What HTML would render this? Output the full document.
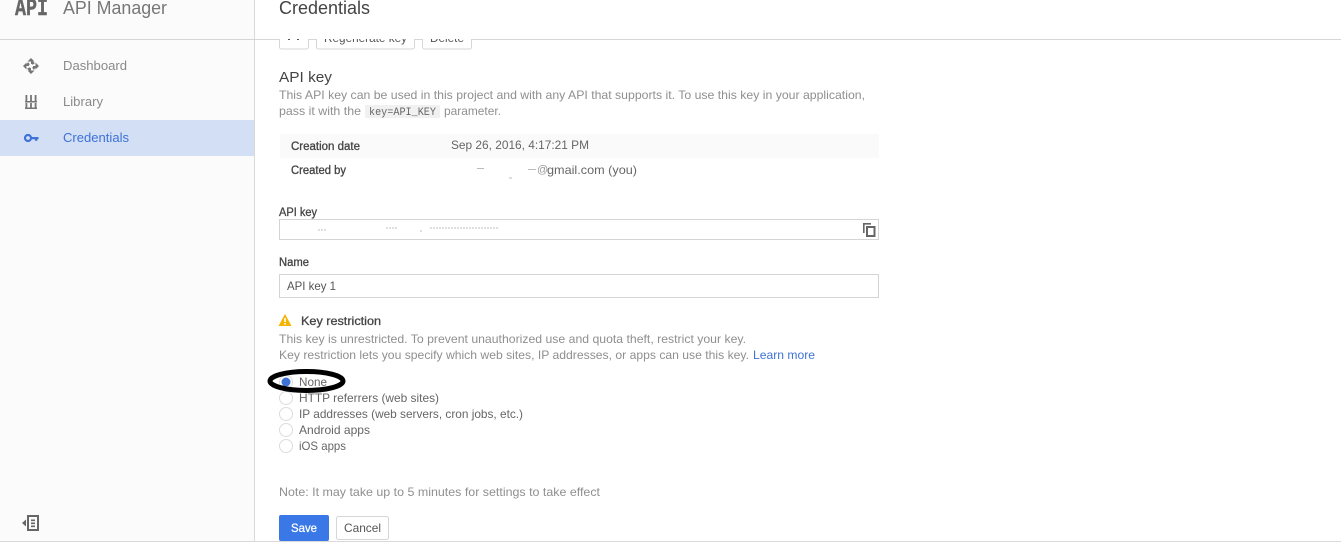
<!DOCTYPE html>
<html><head><meta charset="utf-8"><style>
html,body{margin:0;padding:0;background:#fff}
body{width:1341px;height:542px;position:relative;overflow:hidden;font-family:"Liberation Sans",sans-serif}
svg{position:absolute;left:0;top:0}
text{font-family:"Liberation Sans",sans-serif}
.m{stroke:#444;stroke-width:.3;fill:#444}
</style></head><body>
<svg width="1341" height="542" viewBox="0 0 1341 542">
<rect x="0" y="0" width="254" height="542" fill="#fbfbfb"/>
<rect x="0" y="120" width="254" height="36" fill="#d2dff5"/>
<rect x="254" y="0" width="1" height="542" fill="#d9d9d9"/>
<rect x="0" y="39" width="1341" height="1" fill="#d6d6d6"/>
<rect x="0" y="541" width="1341" height="1" fill="#d9d9d9"/>

<!-- API logo -->
<text x="15" y="15" font-size="24" font-weight="bold" fill="#666" stroke="#666" stroke-width=".4" style="font-family:'Liberation Mono',monospace" textLength="33" lengthAdjust="spacingAndGlyphs">API</text>
<text x="63" y="14" font-size="18" fill="#777" textLength="104" lengthAdjust="spacingAndGlyphs">API Manager</text>

<!-- nav icons -->
<g fill="#757575">
<path d="M31 58l3.5 3.5h-7zM31 74l3.5-3.5h-7zM23 66l3.5-3.5v7zM39 66l-3.5-3.5v7z"/>
<circle cx="31" cy="66" r="3.4" fill="none" stroke="#757575" stroke-width="2.6" stroke-dasharray="3.2 2.1"/>
<path d="M25.5 95h1.8v6h-1.8zM30.1 95h1.8v6h-1.8zM34.7 95h1.8v6h-1.8zM25 101h12v1.5H25zM25.5 103h1.8v4.5h-1.8zM30.1 103h1.8v4.5h-1.8zM34.7 103h1.8v4.5h-1.8zM25 107.5h12v1.5H25z"/>
</g>
<g fill="#3f72d6">
<circle cx="28" cy="138" r="3" fill="none" stroke="#3f72d6" stroke-width="2.2"/>
<path d="M31 137h7.5v2.2h-1.2v1.6h-2.4v-1.6H31z"/>
</g>
<text x="63" y="70" font-size="12.5" fill="#8a8a8a" textLength="64" lengthAdjust="spacingAndGlyphs">Dashboard</text>
<text x="63" y="106" font-size="12.5" fill="#8a8a8a" textLength="40" lengthAdjust="spacingAndGlyphs">Library</text>
<text x="63" y="142" font-size="12.5" fill="#3f72d6" textLength="66" lengthAdjust="spacingAndGlyphs">Credentials</text>

<!-- collapse icon -->
<path d="M22 523l4-3.5v7z" fill="#666"/>
<rect x="28" y="516" width="10" height="14" fill="none" stroke="#666" stroke-width="2"/>
<path d="M31 519.5h4v1.6h-4zM31 522.5h4v1.6h-4zM31 525.5h4v1.6h-4z" fill="#666"/>

<!-- clipped top buttons -->
<g fill="#fff" stroke="#d6d6d6">
<rect x="279.5" y="28" width="29" height="21" rx="2"/>
<rect x="316.5" y="28" width="98" height="21" rx="2"/>
<rect x="422.5" y="28" width="49" height="21" rx="2"/>
</g>
<text x="324" y="42" font-size="11.5" fill="#555" textLength="83" lengthAdjust="spacingAndGlyphs">Regenerate key</text>
<text x="430" y="42" font-size="11.5" fill="#555" textLength="34" lengthAdjust="spacingAndGlyphs">Delete</text>
<path d="M288 37h2v3h-2zM297 37h2v3h-2z" fill="#555"/>
<rect x="255" y="0" width="1086" height="39" fill="#fff"/>
<text x="279" y="14" font-size="18" fill="#444" textLength="91" lengthAdjust="spacingAndGlyphs">Credentials</text>

<!-- API key -->
<text x="279" y="82" font-size="15" fill="#444" textLength="53" lengthAdjust="spacingAndGlyphs">API key</text>
<text x="279" y="99" font-size="12" fill="#8f8f8f" textLength="586" lengthAdjust="spacingAndGlyphs">This API key can be used in this project and with any API that supports it. To use this key in your application,</text>
<text x="279" y="115" font-size="12" fill="#8f8f8f" textLength="82" lengthAdjust="spacingAndGlyphs">pass it with the</text>
<rect x="365" y="105" width="75" height="13" fill="#f1f1f1"/>
<text x="369" y="115" font-size="11" fill="#666" style="font-family:'Liberation Mono',monospace" textLength="67" lengthAdjust="spacingAndGlyphs">key=API_KEY</text>
<text x="444" y="115" font-size="12" fill="#8f8f8f" textLength="57" lengthAdjust="spacingAndGlyphs">parameter.</text>

<rect x="280" y="134" width="599" height="24" fill="#fafafa"/>
<text x="291" y="150" font-size="11.5" class="m" textLength="69" lengthAdjust="spacingAndGlyphs">Creation date</text>
<text x="451" y="149" font-size="12" fill="#666" textLength="138" lengthAdjust="spacingAndGlyphs">Sep 26, 2016, 4:17:21 PM</text>
<text x="291" y="174" font-size="11.5" class="m" textLength="55" lengthAdjust="spacingAndGlyphs">Created by</text>
<text x="547" y="174" font-size="12" fill="#666" textLength="90" lengthAdjust="spacingAndGlyphs">gmail.com (you)</text>
<text x="537" y="173" font-size="11" fill="#999">@</text>
<path d="M477 168.5h7M509 178h3M528 169.5h8" stroke="#bbb" stroke-width="1"/>

<text x="279" y="216" font-size="11.5" class="m" textLength="38" lengthAdjust="spacingAndGlyphs">API key</text>
<rect x="279.5" y="219.5" width="599" height="20" fill="#fff" stroke="#d4d4d4"/>
<path d="M318 230h9M386 228h12M420 231h2M430 228h68" stroke="#ccc" stroke-width="1.2" stroke-dasharray="2 1"/>
<g fill="#666">
<path d="M863 223h8v1.6h-6.4V233H863z"/>
<path fill-rule="evenodd" d="M866 226h9.5v11H866zM868 228v7h5.500v-7z"/>
</g>

<text x="279" y="266" font-size="11.5" class="m" textLength="30" lengthAdjust="spacingAndGlyphs">Name</text>
<rect x="279.5" y="274.5" width="599" height="23" fill="#fff" stroke="#d4d4d4"/>
<text x="287" y="290" font-size="12" fill="#555" textLength="49" lengthAdjust="spacingAndGlyphs">API key 1</text>

<!-- restriction -->
<path d="M285 314l6.500 12h-13z" fill="#f4b400"/>
<rect x="284.2" y="318" width="1.6" height="4" fill="#fff"/>
<rect x="284.2" y="323" width="1.6" height="1.6" fill="#fff"/>
<text x="301" y="325" font-size="12" class="m" textLength="80" lengthAdjust="spacingAndGlyphs">Key restriction</text>
<text x="279" y="343" font-size="12" fill="#8f8f8f" textLength="467" lengthAdjust="spacingAndGlyphs">This key is unrestricted. To prevent unauthorized use and quota theft, restrict your key.</text>
<text x="279" y="359" font-size="12" fill="#8f8f8f" textLength="470" lengthAdjust="spacingAndGlyphs">Key restriction lets you specify which web sites, IP addresses, or apps can use this key.</text>
<text x="753" y="359" font-size="12" fill="#3f72d6" textLength="62" lengthAdjust="spacingAndGlyphs">Learn more</text>

<!-- radios -->
<g fill="#fff" stroke="#dcdcdc">
<circle cx="286" cy="398" r="6.500"/>
<circle cx="286" cy="414" r="6.500"/>
<circle cx="286" cy="430" r="6.500"/>
<circle cx="286" cy="446" r="6.500"/>
</g>
<g font-size="12" fill="#666">
<text x="299" y="402" textLength="140" lengthAdjust="spacingAndGlyphs">HTTP referrers (web sites)</text>
<text x="299" y="418" textLength="224" lengthAdjust="spacingAndGlyphs">IP addresses (web servers, cron jobs, etc.)</text>
<text x="299" y="434" textLength="71" lengthAdjust="spacingAndGlyphs">Android apps</text>
<text x="299" y="450" textLength="47" lengthAdjust="spacingAndGlyphs">iOS apps</text>
</g>
<circle cx="286" cy="382" r="6.500" fill="#fff" stroke="#dcdcdc"/>
<circle cx="286" cy="382" r="4.500" fill="#3f72d6"/>
<text x="299" y="386" font-size="12" fill="#666" textLength="28" lengthAdjust="spacingAndGlyphs">None</text>
<ellipse cx="306.500" cy="381" rx="36.500" ry="9.500" fill="none" stroke="#000" stroke-width="5"/>

<text x="279" y="496" font-size="12" fill="#8f8f8f" textLength="321" lengthAdjust="spacingAndGlyphs">Note: It may take up to 5 minutes for settings to take effect</text>

<rect x="279" y="515" width="50" height="26" rx="2" fill="#3b78e7"/>
<text x="291" y="532" font-size="12" fill="#fff" stroke="#fff" stroke-width=".25" textLength="26" lengthAdjust="spacingAndGlyphs">Save</text>
<rect x="336.500" y="516.500" width="52" height="23" rx="2" fill="#fff" stroke="#d6d6d6"/>
<text x="344" y="532" font-size="12" fill="#555" textLength="37" lengthAdjust="spacingAndGlyphs">Cancel</text>
</svg>
</body></html>
